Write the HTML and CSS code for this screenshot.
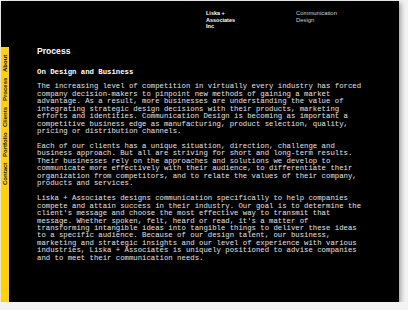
FILE: index.html
```html
<!DOCTYPE html>
<html lang="en">
<head>
    <meta charset="UTF-8">
    <title>Liska + Associates - Process</title>
    <link rel="stylesheet" href="styles.css">
</head>
<body>
    <div class="page">
        <aside class="tabs">
            <nav class="tab-list">
                <a class="tab active" href="#">About</a>
                <a class="tab" href="#">Process</a>
                <a class="tab" href="#">Clients</a>
                <a class="tab" href="#">Portfolio</a>
                <a class="tab" href="#">Contact</a>
            </nav>
        </aside>
        <main class="content">
            <header class="masthead">
                <div class="brand">Liska +<br>Associates<br>Inc</div>
                <div class="tagline">Communication<br>Design</div>
            </header>

            <h1 class="title">Process</h1>
            <h2 class="subtitle">On Design and Business</h2>

            <p class="copy">The increasing level of competition in virtually every industry has forced<br>
company decision-makers to pinpoint new methods of gaining a market<br>
advantage. As a result, more businesses are understanding the value of<br>
integrating strategic design decisions with their products, marketing<br>
efforts and identities. Communication Design is becoming as important a<br>
competitive business edge as manufacturing, product selection, quality,<br>
pricing or distribution channels.</p>

            <p class="copy">Each of our clients has a unique situation, direction, challenge and<br>
business approach. But all are striving for short and long-term results.<br>
Their businesses rely on the approaches and solutions we develop to<br>
communicate more effectively with their audience, to differentiate their<br>
organization from competitors, and to relate the values of their company,<br>
products and services.</p>

            <p class="copy">Liska + Associates designs communication specifically to help companies<br>
compete and attain success in their industry. Our goal is to determine the<br>
client's message and choose the most effective way to transmit that<br>
message. Whether spoken, felt, heard or read, it's a matter of<br>
transforming intangible ideas into tangible things to deliver these ideas<br>
to a specific audience. Because of our design talent, our business,<br>
marketing and strategic insights and our level of experience with various<br>
industries, Liska + Associates is uniquely positioned to advise companies<br>
and to meet their communication needs.</p>
        </main>
    </div>
</body>
</html>
```

FILE: styles.css
```css
body {
    margin: 0;
    background-color: #f3f3f3;
    font-family: "Liberation Sans", Arial, sans-serif;
}

.page {
    display: flex;
    width: 398px;
    height: 301px;
    margin: 1px 0 0 1px;
    background-color: #000;
    box-shadow: 2px 2px 5px rgba(0, 0, 0, 0.35);
    overflow: hidden;
}

.tabs {
    width: 8px;
    margin-top: 46px;
    background-color: #ffd200;
}

.tab-list {
    display: flex;
    flex-direction: row-reverse;
    gap: 5.5px;
    height: 100%;
    box-sizing: border-box;
    padding-bottom: 8px;
    writing-mode: vertical-rl;
    transform: rotate(180deg);
}

.tab {
    color: #1a1a00;
    font-size: 6px;
    font-weight: bold;
    line-height: 8px;
    text-decoration: none;
}

.tab.active {
    color: #000;
}

.content {
    flex: 1;
    padding: 9px 0 0 28px;
}

.masthead {
    display: flex;
    padding-left: 169px;
    line-height: 6.7px;
}

.brand {
    width: 90px;
    color: #fff;
    font-size: 5.5px;
    font-weight: bold;
}

.tagline {
    color: #cfcfcf;
    font-size: 5.9px;
}

.title {
    margin: 16px 0 0;
    color: #fff;
    font-size: 8.6px;
    line-height: 10px;
}

.subtitle {
    margin: 12.5px 0 0;
    color: #fff;
    font-family: "Liberation Mono", "Courier New", monospace;
    font-size: 7.3px;
    font-weight: bold;
    line-height: 7.5px;
}

.copy {
    margin: 7.3px 0 0;
    color: #e2e2e2;
    font-family: "Liberation Mono", "Courier New", monospace;
    font-size: 7.3px;
    line-height: 7.47px;
    white-space: nowrap;
}
```
